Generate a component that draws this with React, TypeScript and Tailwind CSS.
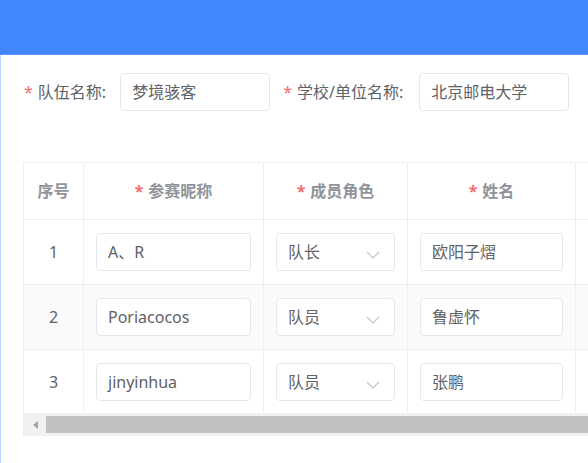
const font = { fontFamily: '"Noto Sans", "Noto Sans CJK SC", sans-serif' };

const members = [
  { no: 1, nick: "A、R", role: "队长", name: "欧阳子熠" },
  { no: 2, nick: "Poriacocos", role: "队员", name: "鲁虚怀" },
  { no: 3, nick: "jinyinhua", role: "队员", name: "张鹏" },
];

const Star = () => <span className="text-[#f56c6c] mr-[5px]">*</span>;

const Chevron = () => (
  <svg width="14" height="8" viewBox="0 0 14 8" fill="none">
    <path d="M1 1l6 6 6-6" stroke="#c0c4cc" strokeWidth="1.2" />
  </svg>
);

const cols = "grid grid-cols-[60px_180px_144px_168px_220px]";

export default function App() {
  return (
    <div
      className="w-[588px] h-[463px] overflow-hidden bg-white text-[#606266] flex flex-col"
      style={font}
    >
      <header className="h-[55px] shrink-0 bg-[#4086ff] border-b border-[#5d98ff]" />

      <div className="flex-1 border-l border-[#bcd6ff] pl-[22px]">
        <div className="flex items-center mt-[18px] h-[38px] text-[16px]">
          <div className="flex items-center pl-px">
            <Star />
            <span>队伍名称:</span>
          </div>
          <div className="ml-[14px] w-[150px] h-[38px] border border-[#e4e7ed] rounded-[4px] flex items-center px-[11px]">
            梦境骇客
          </div>
          <div className="flex items-center ml-[13px]">
            <Star />
            <span>学校/单位名称:</span>
          </div>
          <div className="ml-[16px] w-[150px] h-[38px] border border-[#e4e7ed] rounded-[4px] flex items-center px-[11px]">
            北京邮电大学
          </div>
        </div>

        <div className="mt-[51px] w-[772px] border-t border-l border-[#ebeef5]">
          <div className={`${cols} h-[57px] border-b border-[#ebeef5] text-[16px] font-bold text-[#909399]`}>
            <div className="flex items-center justify-center border-r border-[#ebeef5]">序号</div>
            <div className="flex items-center justify-center border-r border-[#ebeef5]">
              <Star />
              参赛昵称
            </div>
            <div className="flex items-center justify-center border-r border-[#ebeef5]">
              <Star />
              成员角色
            </div>
            <div className="flex items-center justify-center border-r border-[#ebeef5]">
              <Star />
              姓名
            </div>
            <div className="border-r border-[#ebeef5]" />
          </div>

          {members.map((m, i) => (
            <div
              key={m.no}
              className={`${cols} ${i === 2 ? "h-[63px]" : "h-[65px] border-b border-[#ebeef5]"} ${
                i === 1 ? "bg-[#fafafa]" : "bg-white"
              } text-[16px]`}
            >
              <div className="flex items-center justify-center border-r border-[#ebeef5]">{m.no}</div>
              <div className="flex items-center px-[12px] border-r border-[#ebeef5]">
                <div className="w-full h-[38px] bg-white border border-[#e4e7ed] rounded-[4px] flex items-center px-[11px]">
                  {m.nick}
                </div>
              </div>
              <div className="flex items-center px-[12px] border-r border-[#ebeef5]">
                <div className="w-full h-[38px] bg-white border border-[#e4e7ed] rounded-[4px] flex items-center justify-between pl-[11px] pr-[14px]">
                  <span>{m.role}</span>
                  <span className="mt-[6px]">
                    <Chevron />
                  </span>
                </div>
              </div>
              <div className="flex items-center px-[12px] border-r border-[#ebeef5]">
                <div className="w-full h-[38px] bg-white border border-[#e4e7ed] rounded-[4px] flex items-center px-[11px]">
                  {m.name}
                </div>
              </div>
              <div className="border-r border-[#ebeef5]" />
            </div>
          ))}

          <div className="h-[23px] bg-[#f1f1f1] flex items-center">
            <div className="w-[22px] h-full flex items-center justify-center">
              <svg width="5" height="8" viewBox="0 0 5 8">
                <path d="M5 0v8L0 4z" fill="#a3a3a3" />
              </svg>
            </div>
            <div className="flex-1 h-[17px] bg-[#c1c1c1]" />
          </div>
        </div>
      </div>
    </div>
  );
}
